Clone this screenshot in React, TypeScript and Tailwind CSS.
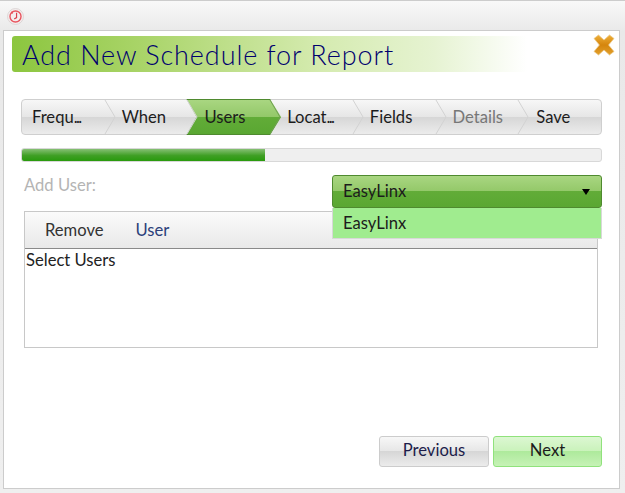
const font = "font-['Lato','Noto_Sans',sans-serif]";

const steps = [
  { label: "Frequ", more: true, pad: "pl-[10px]", color: "text-[#1c1c1c]" },
  { label: "When", pad: "pl-[17px]", color: "text-[#1c1c1c]" },
  { label: "Users", pad: "pl-[17px]", color: "text-[#1c1c1c]", active: true },
  { label: "Locat", more: true, pad: "pl-[17px]", color: "text-[#1c1c1c]" },
  { label: "Fields", pad: "pl-[17px]", color: "text-[#1c1c1c]" },
  { label: "Details", pad: "pl-[17px]", color: "text-[#777777]" },
  { label: "Save", pad: "pl-[18px]", color: "text-[#1c1c1c]" },
];

function Chevron({ stroke }: { stroke: string }) {
  return (
    <svg className="absolute top-0 right-[-11px] z-10" width="12" height="34" viewBox="0 0 12 34" fill="none">
      <polyline points="1,0 11,17 1,34" stroke={stroke} strokeWidth="1" />
    </svg>
  );
}

function AppIcon() {
  return (
    <svg width="17" height="17" viewBox="0 0 16 16" fill="none">
      <circle cx="8" cy="8" r="7.5" fill="#f4eeee" stroke="#d8d0d0" strokeWidth="0.8" />
      <circle cx="8" cy="8" r="5.2" stroke="#e8555f" strokeWidth="1.3" />
      <path d="M9 4.5V9L6.8 10.4" stroke="#d8404c" strokeWidth="1.1" />
      <circle cx="4.8" cy="4.4" r="1" fill="#e8555f" />
    </svg>
  );
}

function CloseIcon() {
  return (
    <svg width="22" height="22" viewBox="0 0 22 22">
      <defs>
        <linearGradient id="closeFill" x1="0" y1="0" x2="0" y2="1">
          <stop offset="0" stopColor="#eeb03a" />
          <stop offset="0.5" stopColor="#d5850c" />
          <stop offset="1" stopColor="#e2a02c" />
        </linearGradient>
      </defs>
      <path
        d="M5.5 1 L11 6 L16.5 1 L21 4.5 L15.6 11 L21 17.5 L16.5 21 L11 16 L5.5 21 L1 17.5 L6.4 11 L1 4.5 Z"
        fill="url(#closeFill)"
        stroke="#ecca8c"
        strokeWidth="0.8"
        strokeLinejoin="round"
      />
    </svg>
  );
}

export default function App() {
  return (
    <div className={`${font} w-[625px] h-[493px] flex flex-col overflow-hidden border-t border-[#cccccc] bg-[linear-gradient(#f8f8f8,#e9e9e9_30px,#efefef)] text-[16.6px] text-[#222222]`}>
      <div className="h-[29px] flex items-center pl-[7px] pt-[2px] shrink-0">
        <AppIcon />
      </div>

      <div className="relative ml-[3px] w-[617px] h-[459px] bg-white border border-[#cccccc] pt-[5px] px-[8px]">
        <div className="h-[36px] w-[515px] rounded-l-[3px] flex items-center pl-[10px] bg-[linear-gradient(90deg,#8cc63f,#a9d468_25%,#d5ebb0_60%,#e6f3d2_82%,#ffffff)]">
          <h1 className="text-[27px] font-light leading-none tracking-[0.92px] text-[#00006e]">Add New Schedule for Report</h1>
        </div>
        <button className="absolute top-[3px] right-[4px]">
          <CloseIcon />
        </button>

        <div className="ml-[9px] mt-[27px] w-[581px] h-[36px] grid grid-cols-7 rounded-[4px] border border-[#cfcfcf] bg-[linear-gradient(#f7f7f7,#e6e6e6_50%,#d6d6d6_50%,#ececec)]">
          {steps.map((step, i) => (
            <div key={step.label} className={`relative flex items-center ${step.pad} ${step.color}`}>
              {step.active && (
                <div className="absolute top-[-1px] bottom-[-1px] left-[-1px] right-[-11px] border-y border-[#4f8a2f] bg-[linear-gradient(#a9d681,#93c869_50%,#62ac38_50%,#5aa732)] [clip-path:polygon(0_0,calc(100%-11px)_0,100%_50%,calc(100%-11px)_100%,0_100%,10px_50%)]" />
              )}
              <span className="relative z-20">
                {step.label}
                {step.more && <span className="tracking-[-1.6px]">...</span>}
              </span>
              {i < steps.length - 1 && <Chevron stroke={step.active ? "#6f9f52" : "#d2d2d2"} />}
            </div>
          ))}
        </div>

        <div className="ml-[9px] mt-[13px] w-[581px] h-[14px] rounded-[3px] border border-[#d8d8d8] bg-[#efefef] overflow-hidden">
          <div className="h-full w-[243px] bg-[linear-gradient(#86c074,#3f9f24_55%,#289a0c)]" />
        </div>

        <div className="relative mt-[13px] ml-[12px] w-[569px] h-[36px] text-[#b4b4b4]">
          <span className="block leading-[20px]">Add User:</span>
          <div className="absolute left-[308px] top-0 w-[270px] z-20 text-[#1c1c1c]">
            <div className="h-[33px] flex items-center justify-between pl-[10px] pr-[11px] rounded-[3px] border border-[#4f8a2f] bg-[linear-gradient(#a9d681,#93c869_50%,#62ac38_50%,#5aa732)]">
              <span>EasyLinx</span>
              <span className="w-0 h-0 border-x-[4px] border-x-transparent border-t-[6px] border-t-black" />
            </div>
            <div className="h-[31px] flex items-center pl-[10px] bg-[#a0ec8f] border-x border-b border-[#d8d8d8]">EasyLinx</div>
          </div>
        </div>

        <div className="ml-[12px] w-[574px] h-[137px] border border-[#c8c8c8]">
          <div className="h-[37px] flex items-center pl-[20px] gap-[32px] border-b border-[#8a8a8a] bg-[linear-gradient(#fbfbfb,#e9e9e9)]">
            <span className="text-[#333333]">Remove</span>
            <span className="text-[#2b3f7a]">User</span>
          </div>
          <div className="pl-[1px] pt-[1px] leading-[20px] text-[#222222]">Select Users</div>
        </div>

        <div className="mt-[88px] ml-[367px] flex gap-[4px]">
          <button className="w-[110px] h-[31px] pb-[2px] rounded-[3px] border border-[#cccccc] text-[#1c1c4a] bg-[linear-gradient(#f7f7f7,#e6e6e6_50%,#d6d6d6_50%,#ececec)]">Previous</button>
          <button className="w-[109px] h-[31px] pb-[2px] rounded-[3px] border border-[#90e27c] text-[#1c1c1c] bg-[linear-gradient(#dcf7d2,#c9f2ba_50%,#aeea9c_50%,#c6f2b6)]">Next</button>
        </div>
      </div>
    </div>
  );
}
